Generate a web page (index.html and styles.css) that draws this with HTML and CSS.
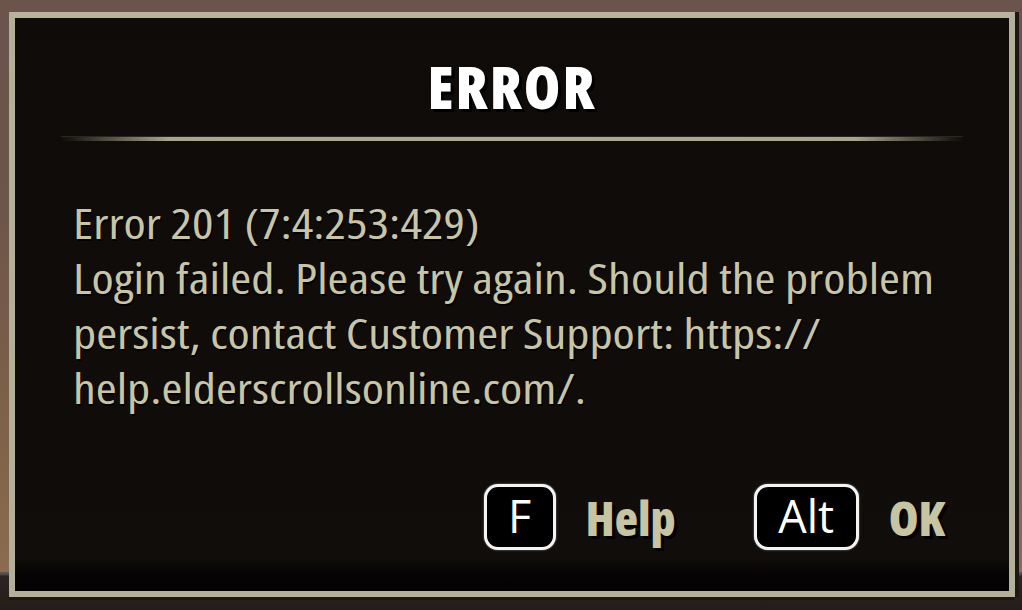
FILE: index.html
```html
<!DOCTYPE html>
<html>
<head>
<meta charset="utf-8">
<link rel="stylesheet" href="styles.css">
</head>
<body>
<div class="frame">
  <div class="inner">
    <h1 class="title">ERROR</h1>
    <div class="divider"></div>
    <div class="message">
      <p>Error 201 (7:4:253:429)</p>
      <p>Login failed. Please try again. Should the problem persist, contact Customer Support: https:// help.elderscrollsonline.com/.</p>
    </div>
    <div class="actions">
      <div class="action">
        <span class="key key-f">F</span>
        <span class="label">Help</span>
      </div>
      <div class="action">
        <span class="key key-alt">Alt</span>
        <span class="label">OK</span>
      </div>
    </div>
    <div class="bottom-band"></div>
  </div>
</div>
</body>
</html>
```

FILE: styles.css
```css
html, body {
  margin: 0;
  padding: 0;
  width: 1022px;
  height: 610px;
  overflow: hidden;
}
body {
  background:
    linear-gradient(to bottom, rgba(0,0,0,0) 0, rgba(0,0,0,0) 572px, #5d5a5c 572px, #4a4444 575px, #2b2420 576px, #241e1b 610px),
    linear-gradient(to bottom, #6a544c 0, #6c5549 200px, #806349 450px, #8c6c50 570px);
  padding-top: 12px;
  padding-left: 9px;
  box-sizing: border-box;
}
.frame {
  width: 1006px;
  height: 585px;
  box-sizing: border-box;
  border: 6px solid #b2b098;
  border-top-color: #b6b49d;
  box-shadow: 4px 0 0 #1c1714, 0 3px 0 #1c1714;
  background: #0f0c0a;
}
.inner {
  height: 100%;
  display: flex;
  flex-direction: column;
  background: linear-gradient(to bottom, #0e0b09 0, #100d0b 540px, #050303 557px, #030202 573px);
}
.title {
  margin: 35px 0 0 0;
  text-align: center;
  font-family: "Open Sans", "DejaVu Sans Condensed", sans-serif;
  font-stretch: 75%;
  font-weight: 800;
  font-size: 59px;
  line-height: 66px;
  letter-spacing: 2px;
  color: #ffffff;
  text-shadow: 3px 3px 0 #000;
}
.divider {
  margin: 18px 46px 0 46px;
  height: 4px;
  background: linear-gradient(to right, rgba(168,165,140,0) 0, #a9a68d 12%, #aeab92 50%, #a9a68d 88%, rgba(168,165,140,0) 100%);
  box-shadow: 0 -1px 0 #2a2620;
}
.message {
  margin: 54px 0 0 58px;
  font-family: "Open Sans", "DejaVu Sans Condensed", sans-serif;
  font-stretch: 75%;
  font-size: 42px;
  line-height: 55px;
  color: #c8c5a6;
  width: 724px;
  transform: scaleX(1.205);
  transform-origin: 0 0;
  text-shadow: 1px 2px 0 #000;
}
.message p {
  margin: 0;
}
.actions {
  margin-top: 69px;
  display: flex;
  justify-content: flex-end;
  gap: 78px;
  padding-right: 64px;
}
.action {
  display: flex;
  align-items: center;
  gap: 30px;
}
.key {
  box-sizing: border-box;
  height: 66px;
  border: 3px solid #f4f4f4;
  border-radius: 14px;
  background: #000;
  color: #fff;
  font-family: "Open Sans", "DejaVu Sans", sans-serif;
  font-size: 45px;
  line-height: 58px;
  text-align: center;
  box-shadow: 0 0 2px #999;
}
.key-f { width: 72px; }
.key-alt { width: 105px; }
.label {
  font-family: "Open Sans", "DejaVu Sans Condensed", sans-serif;
  font-stretch: 75%;
  font-weight: 800;
  font-size: 48px;
  color: #c7c4a2;
  text-shadow: 3px 3px 0 #000;
}
.bottom-band {
  flex: 1;
}
```
